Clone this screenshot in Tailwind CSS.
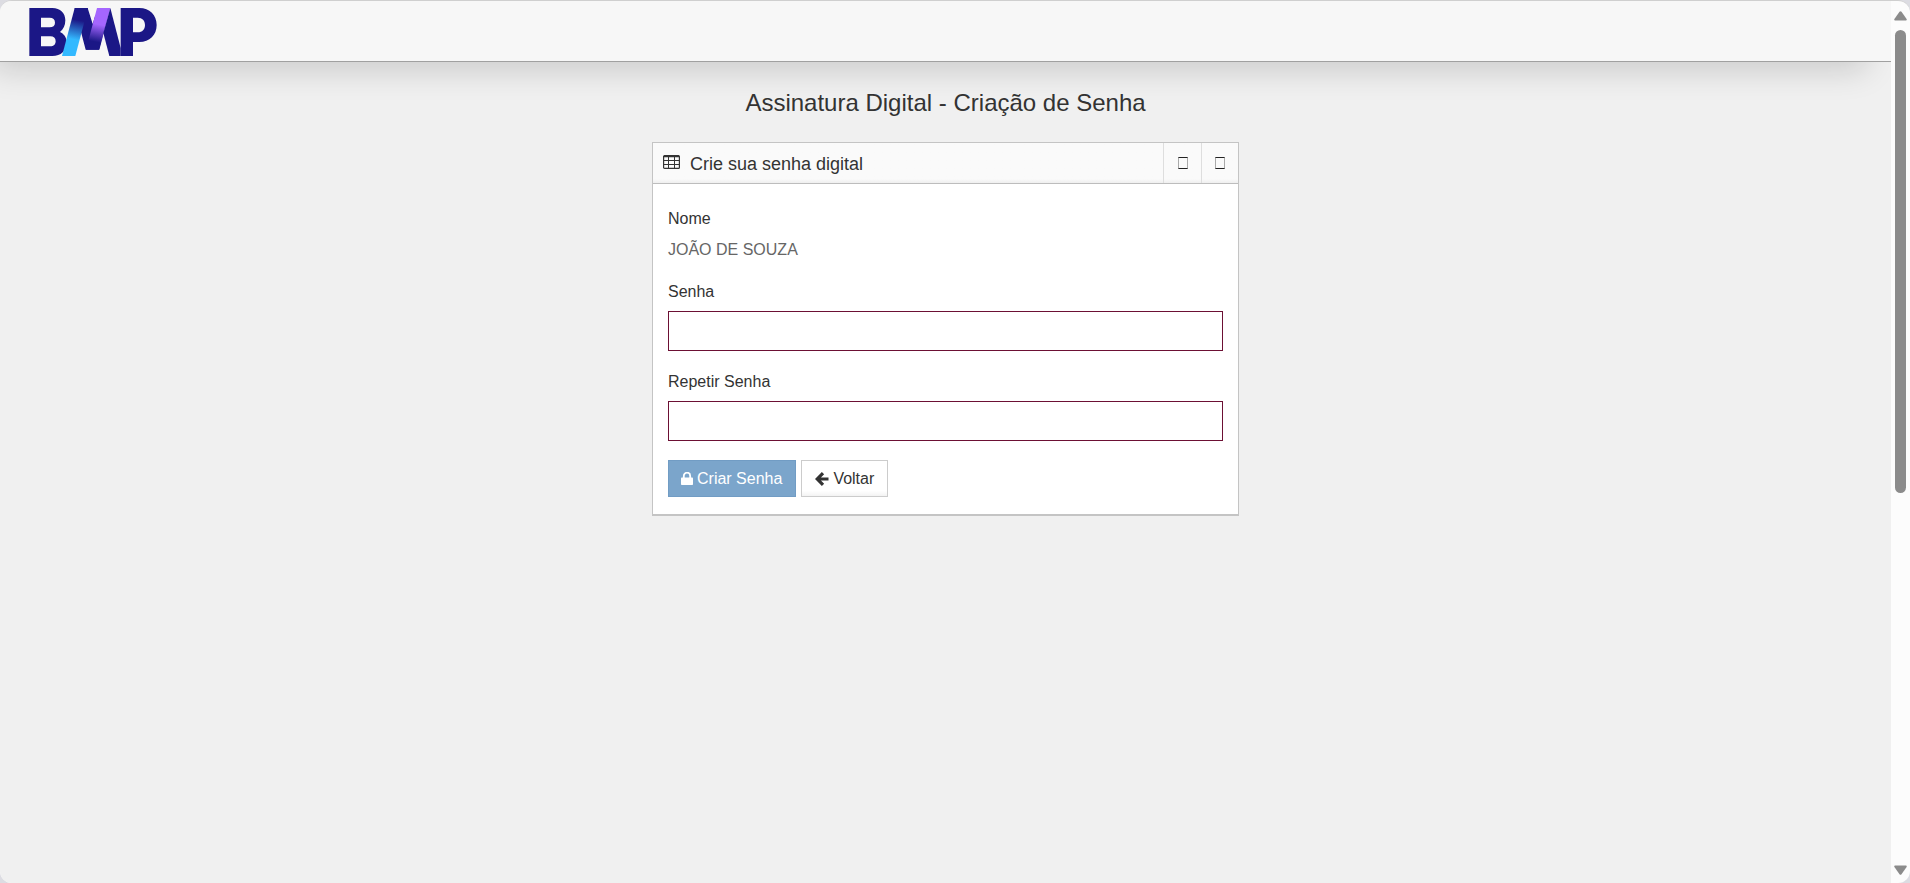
<!DOCTYPE html>
<html lang="pt-BR">
<head>
<meta charset="utf-8">
<meta name="viewport" content="width=device-width, initial-scale=1">
<title>Assinatura Digital - Criação de Senha</title>
<script src="https://cdn.jsdelivr.net/npm/@tailwindcss/browser@4"></script>
</head>
<body class="bg-[#dcdce2] font-['Liberation_Sans',Arial,sans-serif] text-base text-[#333]">
<div class="flex h-screen overflow-hidden rounded-xl border-t border-[#cfcfcf] bg-[#fcfcfc]">
  <div class="flex min-w-0 flex-1 flex-col overflow-hidden bg-[#f0f0f0]">
    <header class="flex h-[61px] shrink-0 items-start border-b border-[#a0a0a0] bg-[#f7f7f7] px-[29px] pt-[7px] shadow-[-16px_16px_32px_-8px_rgba(0,0,0,0.16)]">
      <a href="#" aria-label="BMP">
        <svg class="h-12 w-32" viewBox="87 22 384 144" fill="#1b1786" aria-hidden="true">
          <defs>
            <linearGradient id="cyan" gradientUnits="userSpaceOnUse" x1="232" y1="58" x2="220" y2="116"><stop offset="0" stop-color="#1b1786"/><stop offset="1" stop-color="#33b9ff"/></linearGradient>
            <linearGradient id="violet" gradientUnits="userSpaceOnUse" x1="300" y1="72" x2="290" y2="124"><stop offset="0" stop-color="#a566ff"/><stop offset="1" stop-color="#1b1786"/></linearGradient>
          </defs>
          <path fill-rule="evenodd" d="M88 22H157C181 22 196 37 196 59C196 75 190 86 180 94C191 99 200 110 200 124C200 151 183 166 157 166H88ZM123 51V80H149C159 80 165 75 165 66C165 56 159 51 149 51ZM123 107V137H151C161 137 167 131 167 122C167 112 161 107 151 107Z"/>
          <path d="M224 22H263L278 70L286 44L310 97L297 147H257L244 98Z"/>
          <path fill="url(#cyan)" d="M224 22H264L226 166H186Z"/>
          <path fill="url(#violet)" d="M291 22H331L298 147H258Z"/>
          <path d="M331 22L362 142V166H328L310 97Z"/>
          <path fill-rule="evenodd" d="M362 22H418C449 22 470 43 470 73C470 103 449 124 418 124H399V166H362ZM399 51V95H413C427 95 435 86 435 73C435 60 427 51 413 51Z"/>
        </svg>
      </a>
    </header>
    <main class="flex flex-1 flex-col items-center px-4 pt-[25px]">
      <h1 class="text-2xl leading-8">Assinatura Digital - Criação de Senha</h1>
      <section class="mt-[23px] w-full max-w-[587px] border border-b-2 border-[#c4c4c4] bg-white">
        <div class="flex h-[41px] border-b border-[#bdbdbd] bg-linear-to-b from-[#fafafa] from-90% to-[#efefef]">
          <div class="flex flex-1 items-center gap-2.5 pt-0.5 pl-2.5">
            <svg class="mb-1 h-3.5 w-[17px]" viewBox="0 0 17 14" fill="none" stroke="#333" aria-hidden="true"><rect x=".6" y=".6" width="15.8" height="12.8" rx="1" stroke-width="1.2"/><path d="M1 1.2H16" stroke-width="2"/><path d="M1 5.5H16M1 9.5H16M5.5 1V13M11.5 1V13"/></svg>
            <h2 class="text-lg leading-6">Crie sua senha digital</h2>
          </div>
          <button type="button" aria-label="Recolher" class="flex w-[38px] items-center justify-center border-l border-[#dedede]"><span class="h-3 w-2.5 border border-x-[#aaa] border-y-[#222]"></span></button>
          <button type="button" aria-label="Fechar" class="flex w-[37px] items-center justify-center border-l border-[#dedede]"><span class="h-3 w-2.5 border border-x-[#aaa] border-y-[#222]"></span></button>
        </div>
        <form class="px-[15px] pt-[23px] pb-[17px]">
          <div>
            <div class="leading-6">Nome</div>
            <p class="mt-[7px] leading-6 text-[#666]">JOÃO DE SOUZA</p>
          </div>
          <div class="mt-[18px]">
            <label for="senha" class="block leading-6">Senha</label>
            <input id="senha" type="password" class="mt-[7px] block h-10 w-full border border-[#6c1034] bg-white px-3 outline-none">
          </div>
          <div class="mt-[19px]">
            <label for="repetir" class="block leading-6">Repetir Senha</label>
            <input id="repetir" type="password" class="mt-[7px] block h-10 w-full border border-[#6c1034] bg-white px-3 outline-none">
          </div>
          <div class="mt-[19px] flex gap-[5px]">
            <button type="button" class="flex h-[37px] items-center gap-1 border border-[#719cc4] bg-[#7ba5cb] pr-[13px] pl-3 text-white">
              <svg class="h-[13px] w-3" viewBox="0 0 12 13" aria-hidden="true"><path d="M2.8 6V3.9a3.2 3.2 0 0 1 6.4 0V6" fill="none" stroke="#fff" stroke-width="1.8"/><rect y="5.6" width="12" height="7.4" rx=".8" fill="#fff"/></svg>
              Criar Senha
            </button>
            <button type="button" class="flex h-[37px] items-center gap-1 border border-[#ccc] bg-linear-to-b from-white from-85% to-[#f3f3f3] px-[13px]">
              <svg class="h-3.5 w-[14px]" viewBox="0 0 14 14" fill="none" stroke="#333" stroke-width="3.2" aria-hidden="true"><path d="M13.5 7H2.5M8 1.2L2.2 7L8 12.8"/></svg>
              Voltar
            </button>
          </div>
        </form>
      </section>
    </main>
  </div>
  <div class="flex w-[19px] shrink-0 flex-col items-center pt-2.5 pb-2 text-[#8b8b8b]" aria-hidden="true">
    <svg class="h-2.5 w-[13px] shrink-0" viewBox="0 0 13 10" fill="currentColor"><path d="M5.5 .8Q6.5 -.4 7.5 .8L12.6 8Q13.2 9.5 11.8 9.6H1.2Q-.2 9.5 .4 8Z"/></svg>
    <div class="mt-[9px] min-h-0 flex-1"><div class="h-[55.4%] w-[11px] rounded-full bg-current"></div></div>
    <svg class="h-2.5 w-[13px] shrink-0" viewBox="0 0 13 10" fill="currentColor"><path d="M5.5 9.2Q6.5 10.4 7.5 9.2L12.6 2Q13.2 .5 11.8 .4H1.2Q-.2 .5 .4 2Z"/></svg>
  </div>
</div>
</body>
</html>
